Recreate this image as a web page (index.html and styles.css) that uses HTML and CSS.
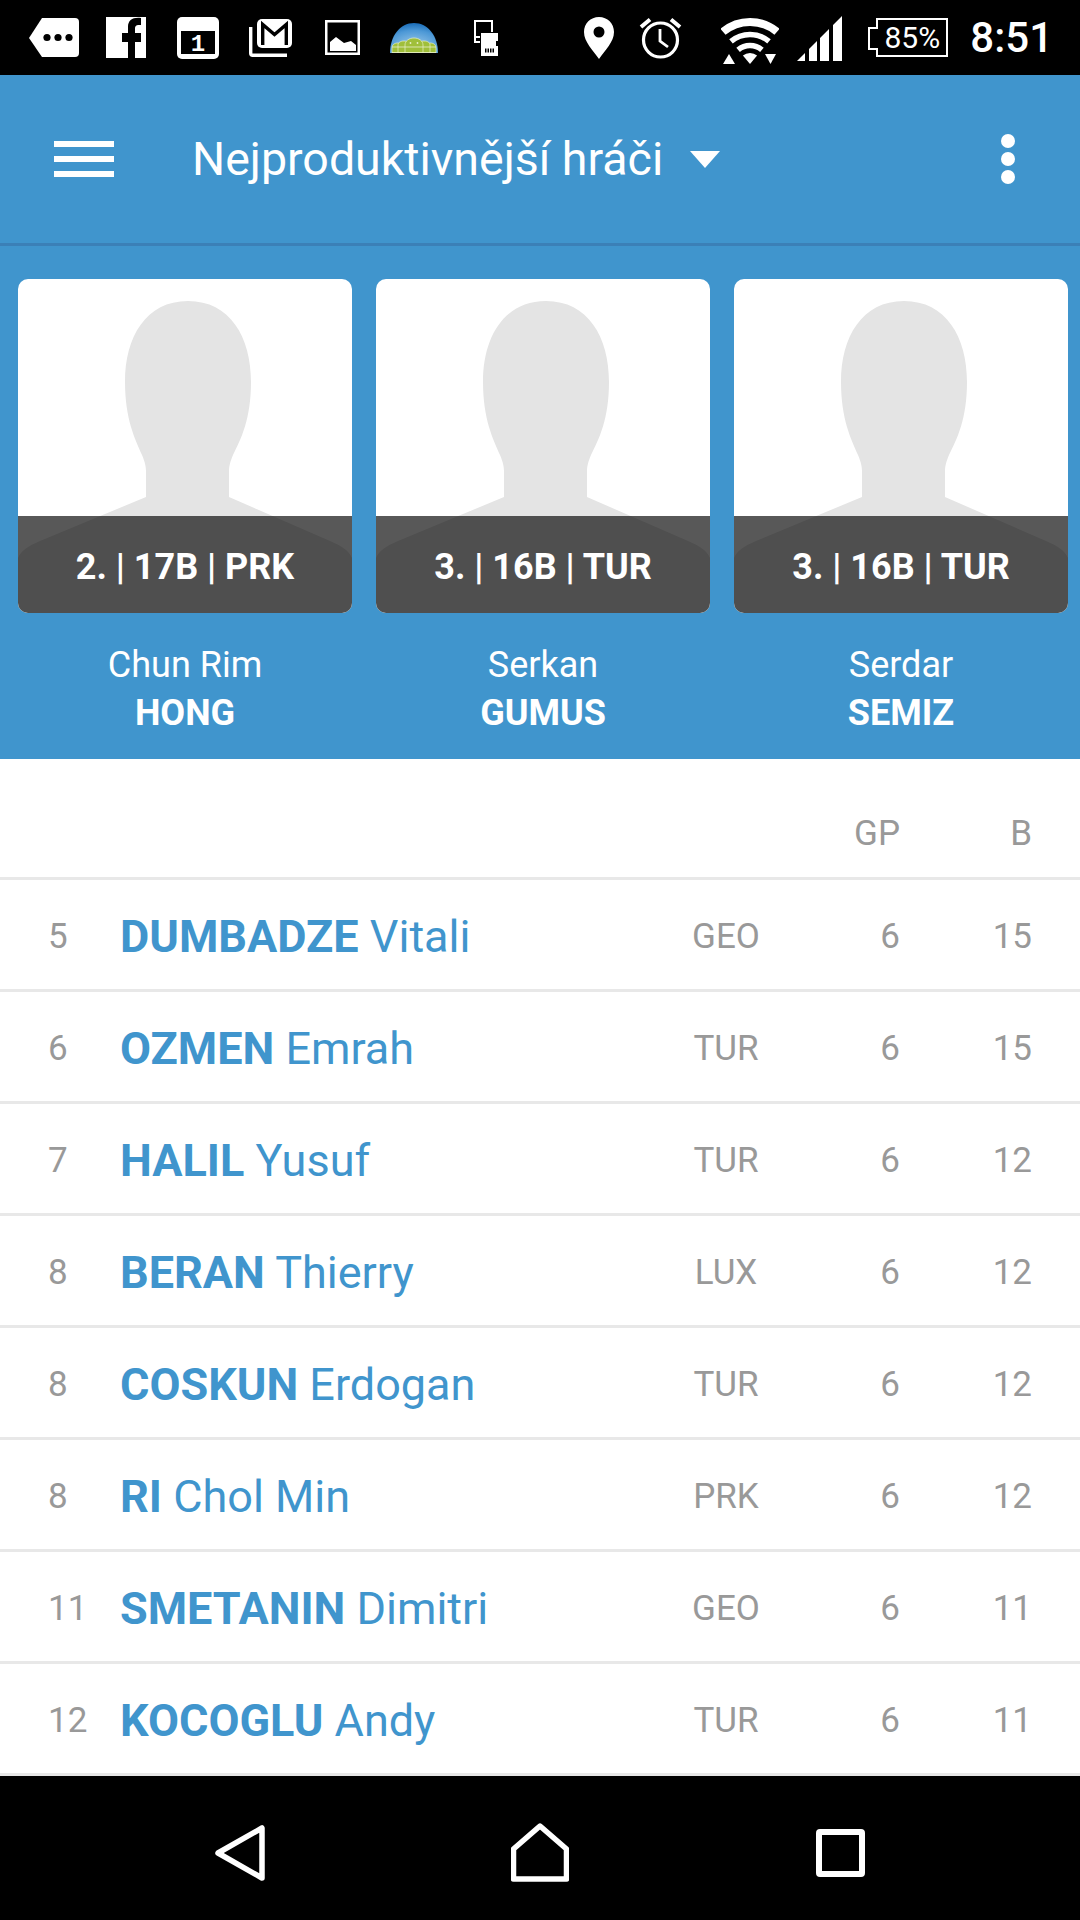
FILE: index.html
```html
<!DOCTYPE html>
<html lang="cs">

<head>
    <meta charset="UTF-8">
    <meta name="viewport" content="width=device-width, initial-scale=1.0">
    <title>Nejproduktivnější hráči</title>
    <link rel="stylesheet" href="styles.css">
</head>

<body>
    <svg class="defs" width="0" height="0">
        <symbol id="avatar" viewBox="0 0 334 334">
            <path fill="#e4e4e4" d="M170 22C128 22 107 58 107 103C107 140 117 160 124 176C127 183 128 188 128 192V218L22 262C10 267 3 272 0 279V334H334V279C331 272 324 267 312 262L211 218V192C211 188 212 183 215 176C223 160 233 140 233 103C233 58 212 22 170 22Z" />
        </symbol>
    </svg>

    <header class="status-bar">
        <div class="status-left">
            <span class="status-cell">
                <svg width="50" height="39" viewBox="0 0 50 39">
                    <path fill="#fff" d="M13 0H46a4 4 0 0 1 4 4V35a4 4 0 0 1-4 4H13L0 20Z" />
                    <circle cx="18" cy="19.5" r="3.6" /><circle cx="29" cy="19.5" r="3.6" /><circle cx="40" cy="19.5" r="3.6" />
                </svg>
            </span>
            <span class="status-cell">
                <svg width="40" height="41" viewBox="0 0 40 41">
                    <path fill="#fff" fill-rule="evenodd" d="M0 0H40V41H29V25H35V16H29V12C29 9 30 8 33 8H35V1C27 0 22 3 22 10V16H16V25H22V41H0Z" />
                </svg>
            </span>
            <span class="status-cell">
                <svg width="42" height="42" viewBox="0 0 42 42">
                    <rect width="42" height="42" rx="5" fill="#fff" />
                    <rect x="4" y="14" width="34" height="23" fill="#000" />
                    <text x="21" y="34" class="calendar-day">1</text>
                </svg>
            </span>
            <span class="status-cell">
                <svg width="43" height="38" viewBox="0 0 43 38">
                    <path fill="none" stroke="#fff" stroke-width="3.4" d="M1.7 8V34.3a2 2 0 0 0 2 2H38" />
                    <rect x="8" y="0" width="35" height="29" rx="5" fill="#fff" />
                    <path fill="none" stroke="#000" stroke-width="3.4" d="M13.7 26V5.500L25.500 15.500L37.300 5.500V26" />
                </svg>
            </span>
            <span class="status-cell">
                <svg width="35" height="35" viewBox="0 0 35 35">
                    <rect x="1.250" y="1.250" width="32.500" height="32.500" fill="none" stroke="#fff" stroke-width="2.500" />
                    <path fill="#fff" d="M5 31V22L11 17L19 23L26 21L31 25V31Z" />
                </svg>
            </span>
            <span class="status-cell">
                <svg width="48" height="30" viewBox="0 0 48 30">
                    <defs>
                        <radialGradient id="globeBlue" cx="0.5" cy="0.8" r="0.85">
                            <stop offset="0" stop-color="#a4cdea" />
                            <stop offset="0.65" stop-color="#4c98d6" />
                            <stop offset="1" stop-color="#0f62b0" />
                        </radialGradient>
                    </defs>
                    <path fill="url(#globeBlue)" d="M0 30C0 13 10 0 24 0S48 13 48 30Z" />
                    <g fill="#a0bf3a" stroke="#e8efca" stroke-width="0.7">
                        <path d="M2 30V25C2 22 4 20 8 20S14 22 14 25V30Z" />
                        <path d="M34 30V25C34 22 36 20 40 20S46 22 46 25V30Z" />
                        <path d="M8 30V22C8 20 10 18 14 18S20 20 20 22V30Z" />
                        <path d="M28 30V22C28 20 30 18 34 18S40 20 40 22V30Z" />
                        <path d="M15 30V22C15 18 19 15 24 15S33 18 33 22V30Z" />
                    </g>
                    <path stroke="#e8efca" stroke-width="0.8" d="M2 24H46M2 29.500H46" />
                    <circle cx="20.500" cy="20" r="0.9" fill="#e8efca" /><circle cx="27.500" cy="20" r="0.9" fill="#e8efca" />
                </svg>
            </span>
            <span class="status-cell">
                <svg width="24" height="36" viewBox="0 0 24 36">
                    <path fill="none" stroke="#fff" stroke-width="2" d="M1 23V1H18V12" />
                    <path fill="#fff" d="M1 16H6V18H1ZM1 21H6V23H1Z" />
                    <path fill="#fff" d="M7 13H24V21H22V26H24V36H7Z" />
                    <path stroke="#000" stroke-width="4" stroke-dasharray="1.500 1" d="M11 30.500H20" />
                </svg>
            </span>
        </div>
        <div class="status-right">
            <svg class="icon-pin" width="30" height="42" viewBox="0 0 30 42">
                <path fill="#fff" fill-rule="evenodd" d="M15 0C6.500 0 0 6.500 0 15C0 25 9 33 15 42C21 33 30 25 30 15C30 6.500 23.500 0 15 0ZM15 9.500A5.500 5.500 0 1 1 15 20.500A5.500 5.500 0 1 1 15 9.500Z" />
            </svg>
            <svg class="icon-alarm" width="43" height="43" viewBox="0 0 43 43">
                <g fill="none" stroke="#fff">
                    <circle cx="21.500" cy="24" r="17" stroke-width="3.200" />
                    <path stroke-width="2.800" d="M21 13V25L29 31" />
                    <path stroke-width="4" d="M2 11L11 3.500M41 11L32 3.500" />
                </g>
            </svg>
            <svg class="icon-wifi" width="58" height="48" viewBox="0 0 58 48">
                <g fill="none" stroke="#fff">
                    <path stroke-width="8" d="M2 14.800A42 42 0 0 1 56 14.800" />
                    <path stroke-width="5.500" d="M10 24.400A29.500 29.500 0 0 1 48 24.400" />
                    <path stroke-width="5.500" d="M17.100 32.800A18.500 18.500 0 0 1 40.900 32.800" />
                </g>
                <path fill="#fff" d="M29 47L21.900 38.600A11 11 0 0 1 36.100 38.600Z" />
                <path fill="#fff" d="M2 47L8 37L14 47Z" />
                <path fill="#fff" d="M44 37H55L49.500 47Z" />
            </svg>
            <svg class="icon-signal" width="45" height="45" viewBox="0 0 45 45">
                <path fill="#fff" d="M0 45L8 37V45ZM12 33L20 25V45H12ZM23 22L32 13V45H23ZM36 9L45 0V45H36Z" />
            </svg>
            <div class="battery">
                <svg class="battery-shape" width="80" height="39" viewBox="0 0 80 39">
                    <path fill="none" stroke="#fff" stroke-width="2" d="M9 1H79V38H9V31H1V10H9Z" />
                </svg>
                <span class="battery-text">85%</span>
            </div>
            <span class="clock">8:51</span>
        </div>
    </header>

    <nav class="toolbar">
        <div class="menu-icon"><span></span><span></span><span></span></div>
        <h1 class="title">Nejproduktivnější hráči</h1>
        <span class="caret"></span>
        <div class="more"><span></span><span></span><span></span></div>
    </nav>

    <section class="hero">
        <div class="player">
            <div class="photo">
                <svg class="avatar"><use href="#avatar" /></svg>
                <div class="photo-bar">2. | 17B | PRK</div>
            </div>
            <div class="player-name">Chun Rim<strong>HONG</strong></div>
        </div>
        <div class="player">
            <div class="photo">
                <svg class="avatar"><use href="#avatar" /></svg>
                <div class="photo-bar">3. | 16B | TUR</div>
            </div>
            <div class="player-name">Serkan<strong>GUMUS</strong></div>
        </div>
        <div class="player">
            <div class="photo">
                <svg class="avatar"><use href="#avatar" /></svg>
                <div class="photo-bar">3. | 16B | TUR</div>
            </div>
            <div class="player-name">Serdar<strong>SEMIZ</strong></div>
        </div>
    </section>

    <main class="table">
        <div class="row head">
            <span></span><span></span><span></span>
            <span class="num">GP</span>
            <span class="num">B</span>
        </div>
        <div class="row">
            <span>5</span><span class="name"><b>DUMBADZE</b> Vitali</span><span class="team">GEO</span>
            <span class="num">6</span><span class="num">15</span>
        </div>
        <div class="row">
            <span>6</span><span class="name"><b>OZMEN</b> Emrah</span><span class="team">TUR</span>
            <span class="num">6</span><span class="num">15</span>
        </div>
        <div class="row">
            <span>7</span><span class="name"><b>HALIL</b> Yusuf</span><span class="team">TUR</span>
            <span class="num">6</span><span class="num">12</span>
        </div>
        <div class="row">
            <span>8</span><span class="name"><b>BERAN</b> Thierry</span><span class="team">LUX</span>
            <span class="num">6</span><span class="num">12</span>
        </div>
        <div class="row">
            <span>8</span><span class="name"><b>COSKUN</b> Erdogan</span><span class="team">TUR</span>
            <span class="num">6</span><span class="num">12</span>
        </div>
        <div class="row">
            <span>8</span><span class="name"><b>RI</b> Chol Min</span><span class="team">PRK</span>
            <span class="num">6</span><span class="num">12</span>
        </div>
        <div class="row">
            <span>11</span><span class="name"><b>SMETANIN</b> Dimitri</span><span class="team">GEO</span>
            <span class="num">6</span><span class="num">11</span>
        </div>
        <div class="row">
            <span>12</span><span class="name"><b>KOCOGLU</b> Andy</span><span class="team">TUR</span>
            <span class="num">6</span><span class="num">11</span>
        </div>
    </main>

    <footer class="nav-bar">
        <span class="nav-cell">
            <svg width="50" height="56" viewBox="0 0 50 56">
                <path fill="none" stroke="#fff" stroke-width="5.500" stroke-linejoin="round" d="M47 3V53L3 28Z" />
            </svg>
        </span>
        <span class="nav-cell">
            <svg width="58" height="59" viewBox="0 0 58 59">
                <path fill="none" stroke="#fff" stroke-width="5.500" stroke-linejoin="round" d="M29 3L55.500 26V56H2.500V26Z" />
            </svg>
        </span>
        <span class="nav-cell">
            <svg width="49" height="48" viewBox="0 0 49 48">
                <rect x="3" y="3" width="43" height="42" rx="1" fill="none" stroke="#fff" stroke-width="6" />
            </svg>
        </span>
    </footer>
</body>

</html>
```

FILE: styles.css
```css
* {
    box-sizing: border-box;
}

body {
    margin: 0;
    width: 1080px;
    height: 1920px;
    overflow: hidden;
    background-color: white;
    font-family: Roboto, sans-serif;
}

.defs {
    display: block;
    height: 0;
}

/* status bar */
.status-bar {
    height: 75px;
    background-color: black;
    color: white;
    display: flex;
    justify-content: space-between;
    align-items: center;
    padding: 0 27px 0 18px;
}

.status-left {
    display: flex;
    align-items: center;
}

.status-cell {
    width: 72px;
    display: flex;
    justify-content: center;
}

.status-cell svg,
.status-right svg {
    display: block;
}

.calendar-day {
    fill: white;
    font-family: "Liberation Mono", monospace;
    font-weight: bold;
    font-size: 24px;
    text-anchor: middle;
}

.status-right {
    display: flex;
    align-items: center;
}

.icon-alarm {
    margin-left: 25px;
}

.icon-wifi {
    margin-left: 39px;
    margin-top: 6px;
}

.icon-signal {
    margin-left: 18px;
    margin-top: 2px;
}

.battery {
    margin-left: 26px;
    width: 80px;
    height: 39px;
    position: relative;
}

.battery-shape {
    position: absolute;
    top: 0;
    left: 0;
}

.battery-text {
    position: absolute;
    top: 0;
    left: 9px;
    width: 70px;
    text-align: center;
    font-size: 30px;
    line-height: 39px;
}

.clock {
    margin-left: 22px;
    font-size: 42px;
    font-weight: 500;
}

/* toolbar */
.toolbar {
    height: 171px;
    background-color: #4095cd;
    border-bottom: 3px solid #3b80b7;
    color: white;
    display: flex;
    align-items: center;
    padding: 0 0 0 54px;
}

.menu-icon {
    width: 60px;
    height: 36px;
    display: flex;
    flex-direction: column;
    justify-content: space-between;
}

.menu-icon span {
    height: 6px;
    background-color: white;
}

.title {
    margin: 0 0 0 78px;
    font-size: 46.5px;
    font-weight: 400;
}

.caret {
    margin-left: 27px;
    border-left: 15px solid transparent;
    border-right: 15px solid transparent;
    border-top: 17px solid white;
}

.more {
    margin-left: auto;
    margin-right: 65px;
    display: flex;
    flex-direction: column;
    gap: 4px;
}

.more span {
    width: 14px;
    height: 14px;
    border-radius: 50%;
    background-color: white;
}

/* top three players */
.hero {
    height: 513px;
    background-color: #4095cd;
    padding: 33px 12px 0 18px;
    display: grid;
    grid-template-columns: repeat(3, 334px);
    gap: 24px;
}

.photo {
    height: 334px;
    background-color: white;
    border-radius: 10px;
    overflow: hidden;
    position: relative;
}

.avatar {
    display: block;
    width: 334px;
    height: 334px;
}

.photo-bar {
    position: absolute;
    left: 0;
    right: 0;
    bottom: 0;
    height: 97px;
    padding-top: 3px;
    background-color: rgba(0, 0, 0, 0.655);
    color: white;
    font-size: 36px;
    font-weight: 700;
    line-height: 97px;
    text-align: center;
}

.player-name {
    margin-top: 28px;
    color: white;
    font-size: 36px;
    line-height: 48px;
    text-align: center;
}

.player-name strong {
    display: block;
    font-weight: 700;
}

/* table */
.row {
    height: 112px;
    border-bottom: 3px solid #e8e8e8;
    padding: 4px 48px 0 48px;
    display: grid;
    grid-template-columns: 72px 1fr 120px 114px 132px;
    align-items: center;
    color: #999999;
    font-size: 35px;
}

.head {
    height: 121px;
    padding-top: 30px;
}

.name {
    color: #4095cd;
    font-size: 45px;
}

.name b {
    font-weight: 700;
}

.team {
    text-align: center;
}

.num {
    text-align: right;
}

/* android buttons */
.nav-bar {
    height: 144px;
    padding-top: 9px;
    background-color: black;
    display: flex;
    justify-content: center;
    align-items: center;
}

.nav-cell {
    width: 300px;
    display: flex;
    justify-content: center;
}

.nav-cell svg {
    display: block;
}
```
